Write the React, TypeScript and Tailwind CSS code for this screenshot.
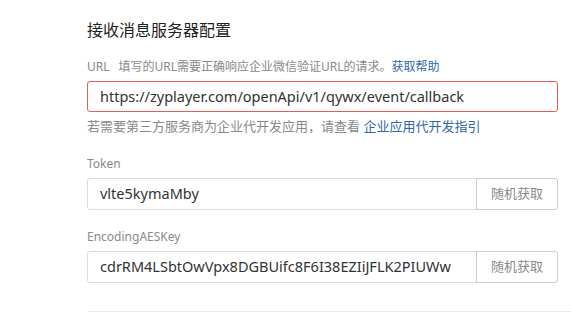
import React from "react";

const font = { fontFamily: '"Noto Sans", "Noto Sans CJK SC", sans-serif' };

function KeyField({ label, value }: { label: string; value: string }) {
  return (
    <div className="flex flex-col">
      <div className="text-[12px] leading-[16px] text-[#8a8a8a]">{label}</div>
      <div className="mt-[6px] flex h-[32px] w-[471px]">
        <div className="flex flex-1 items-center border border-[#dcdcdc] rounded-l-[3px] pl-[12px] text-[14.5px] text-[#333]">
          {value}
        </div>
        <button className="w-[82px] border border-[#c7ced8] -ml-px rounded-r-[3px] text-[13px] text-[#8a8a8a] bg-white">
          随机获取
        </button>
      </div>
    </div>
  );
}

export default function App() {
  return (
    <div className="w-[571px] h-[335px] bg-white overflow-hidden" style={font}>
      <div className="pl-[87px] pt-[20px]">
        <div className="text-[16px] leading-[20px] text-[#222]">接收消息服务器配置</div>
        <div className="mt-[19px] text-[12px] leading-[16px] text-[#8a8a8a]">
          URL<span className="ml-[9px]">填写的URL需要正确响应企业微信验证URL的请求。</span>
          <span className="text-[#2f67ad]">获取帮助</span>
        </div>
        <div className="mt-[6px] flex h-[31px] w-[471px] items-center border border-[#ec5b5b] rounded-[3px] pl-[12px] text-[14.5px] text-[#333]">
          https://zyplayer.com/openApi/v1/qywx/event/callback
        </div>
        <div className="mt-[5px] text-[13px] leading-[18px] text-[#8a8a8a]">
          若需要第三方服务商为企业代开发应用，请查看 <span className="text-[#2f67ad]">企业应用代开发指引</span>
        </div>
        <div className="mt-[21px] flex flex-col gap-[19px]">
          <KeyField label="Token" value="vlte5kymaMby" />
          <KeyField label="EncodingAESKey" value="cdrRM4LSbtOwVpx8DGBUifc8F6I38EZIiJFLK2PIUWw" />
        </div>
        <div className="mt-[28px] h-px bg-[#ececec]" />
      </div>
    </div>
  );
}
